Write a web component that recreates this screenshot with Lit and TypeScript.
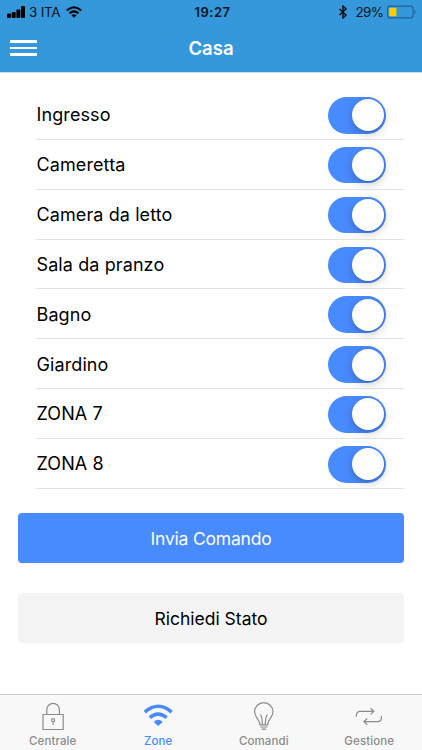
import { LitElement, html, css, svg } from "lit";
import { customElement, property, state } from "lit/decorators.js";
import { classMap } from "lit/directives/class-map.js";

const wifi = svg`<svg class="wifi" viewBox="0 0 30 22" fill="none" stroke="currentColor" stroke-width="4">
  <path d="M1.5 8.2Q15-4 28.5 8.2"/><path d="M6.7 13.6Q15 6.4 23.3 13.6"/>
  <path d="M10.2 17.3Q15 13.2 19.8 17.3L15 22Z" fill="currentColor" stroke="none"/></svg>`;

const icons: Record<string, unknown> = {
  lock: svg`<svg class="icon" viewBox="0 0 30 30" fill="none" stroke="currentColor" stroke-width="1.2">
    <path d="M5 13.5h20.2v15H5zM8.8 13.5V8.7a6.3 6.3 0 0 1 12.6 0v4.8"/>
    <circle cx="15.1" cy="19.2" r="1.5"/><path d="M15.1 20.7v3"/></svg>`,
  wifi: svg`<svg class="icon" viewBox="0 0 30 30" fill="none" stroke="currentColor" stroke-width="3.6">
    <path d="M1.8 11.1Q15.2-.6 28.6 11.1"/><path d="M6.8 16.7Q15.2 9.5 23.6 16.7"/>
    <path d="M10.7 20.9Q15.2 16.5 19.7 20.9L15.2 25.1Z" fill="currentColor" stroke="none"/></svg>`,
  bulb: svg`<svg class="icon" viewBox="0 0 30 30" fill="none" stroke="currentColor" stroke-width="1.2">
    <path d="M11 23.9C11 18.4 5.6 16.3 5.6 10.8a9.2 9.2 0 0 1 18.4 0C24 16.3 18.6 18.4 18.6 23.9Z"/>
    <path d="M13.4 23.7c0-5-.3-7.6-2-10.2M16.3 23.7c0-5 .3-7.6 2-10.2M11.2 26h7.2M12.6 28.2h4.5"/></svg>`,
  loop: svg`<svg class="icon" viewBox="0 0 30 30" fill="none" stroke="currentColor" stroke-width="1.2">
    <path d="M2.4 15.8v-1.6c0-2.7 1.4-3.9 4-3.9h12.9M16.6 7.2l3.3 3.1-3.3 3.1M27.4 15.1v1.6c0 2.7-1.4 3.9-4 3.9H10.3M13.2 17.5L9.9 20.6l3.3 3.1"/></svg>`,
};

@customElement("zone-toggle")
export class ZoneToggle extends LitElement {
  @property({ type: Boolean }) on = true;
  static styles = css`
    :host { display: block; }
    .track { display: flex; justify-content: flex-end; box-sizing: border-box; width: 57.6px; height: 36.6px; padding: 2.3px; border-radius: 19px; background: #488aff; }
    .track.off { justify-content: flex-start; background: #e5e5e5; }
    .knob { width: 32px; height: 32px; border-radius: 50%; background: #fff; box-shadow: 0 3px 10px rgba(0,0,0,.22), 0 1px 1px rgba(0,0,0,.1); }
  `;
  render() {
    return html`<div class=${classMap({ track: true, off: !this.on })}><div class="knob"></div></div>`;
  }
}

@customElement("app-root")
export class AppRoot extends LitElement {
  @state() private zones = ["Ingresso", "Cameretta", "Camera da letto", "Sala da pranzo", "Bagno", "Giardino", "ZONA 7", "ZONA 8"]
    .map((name) => ({ name, on: true }));
  private tabs = [["lock", "Centrale"], ["wifi", "Zone"], ["bulb", "Comandi"], ["loop", "Gestione"]];

  static styles = css`
    :host { display: flex; flex-direction: column; height: 750px; background: #fff; color: #000; font-family: Inter, "Liberation Sans", sans-serif; }
    header { height: 72px; background: #3498db; flex: none; box-shadow: 0 1px 0 rgba(52,120,180,.25); }
    .status, .bar { display: grid; grid-template-columns: 1fr auto 1fr; align-items: center; }
    .status { height: 24px; font-size: 13px; line-height: 24px; color: #071622; }
    .left, .right { display: flex; align-items: center; }
    .left { padding-left: 7px; }
    .right { justify-content: flex-end; padding-right: 6px; }
    .signal { width: 18px; height: 12px; margin-right: 4px; color: #000; }
    .carrier { font-size: 13.5px; letter-spacing: -.25px; }
    .left .wifi { width: 16px; height: 12px; margin-left: 6px; color: #000; }
    .time { font-weight: 600; letter-spacing: .45px; padding-left: 3px; }
    .bluetooth { width: 8px; height: 14px; margin-right: 8px; color: #000; }
    .percent { letter-spacing: -.6px; font-size: 13.5px; }
    .battery { width: 29px; height: 14px; margin-left: 3.5px; }
    .bar { height: 48px; }
    .menu { display: grid; gap: 4px; width: 27px; margin-left: 10px; }
    .menu i { height: 2.5px; background: #fff; }
    h1 { margin: 0; font-size: 18.5px; font-weight: 600; line-height: 46px; color: #fff; letter-spacing: 0; }
    main { flex: 1; padding: 18px 18px 0; }
    .list { padding-left: 18px; }
    .row { display: flex; align-items: center; justify-content: space-between; box-sizing: border-box; height: 49.85px; padding: 1.8px 18px 0 0; border-bottom: 1px solid #e2e2e2; font-size: 18px; letter-spacing: .1px; }
    .row span { padding: 0 0 1px .5px; }
    button { display: block; width: 100%; height: 50px; padding: 0; border: 0; border-radius: 4px; font: 400 17.5px/51px Inter, sans-serif; }
    .primary { margin-top: 24.6px; background: #488aff; color: #fff; letter-spacing: -.2px; }
    .plain { margin-top: 29.6px; background: #f4f4f4; color: #000; letter-spacing: 0; }
    nav { display: grid; grid-template-columns: repeat(4, 1fr); box-sizing: border-box; height: 56px; padding-top: 6px; flex: none; border-top: 1px solid #cfcfcf; background: #f8f8f8; }
    .tab { display: flex; flex-direction: column; align-items: center; color: #8c8c8c; font-size: 11.5px; font-weight: 500; line-height: 17px; letter-spacing: .1px; }
    .tab.active { color: #488aff; }
    .icon { width: 30px; height: 30px; margin-bottom: 2px; }
  `;

  render() {
    return html`
      <header>
        <div class="status">
          <div class="left">
            <svg class="signal" viewBox="0 0 18 12" fill="currentColor"><rect y="7.5" width="4" height="4.5" rx="1"/><rect x="4.7" y="6" width="4" height="6" rx="1"/><rect x="9.4" y="3.5" width="4" height="8.5" rx="1"/><rect x="14" width="4" height="12" rx="1"/></svg>
            <span class="carrier">3 ITA</span>${wifi}
          </div>
          <span class="time">19:27</span>
          <div class="right">
            <svg class="bluetooth" viewBox="0 0 8 14" fill="none" stroke="currentColor" stroke-width="1.3"><path d="M.6 4l6.4 6L4 13V1l3 3-6.4 6"/></svg>
            <span class="percent">29%</span>
            <svg class="battery" viewBox="0 0 29 14"><rect x=".6" y="1.1" width="25.5" height="11.8" rx="2.3" fill="none" stroke="#23628f" stroke-width="1.1"/><rect x="2.2" y="2.8" width="7.2" height="8.4" rx=".6" fill="#ffcc00"/><path d="M27.3 4.8q1.3.6 1.3 2.2t-1.3 2.2z" fill="#23628f"/></svg>
          </div>
        </div>
        <div class="bar"><div class="menu"><i></i><i></i><i></i></div><h1>Casa</h1></div>
      </header>
      <main>
        <div class="list">
          ${this.zones.map((zone) => html`<div class="row"><span>${zone.name}</span><zone-toggle .on=${zone.on}></zone-toggle></div>`)}
        </div>
        <button class="primary">Invia Comando</button>
        <button class="plain">Richiedi Stato</button>
      </main>
      <nav>
        ${this.tabs.map(([icon, label]) => html`<div class=${classMap({ tab: true, active: icon === "wifi" })}>${icons[icon]}<span>${label}</span></div>`)}
      </nav>`;
  }
}
